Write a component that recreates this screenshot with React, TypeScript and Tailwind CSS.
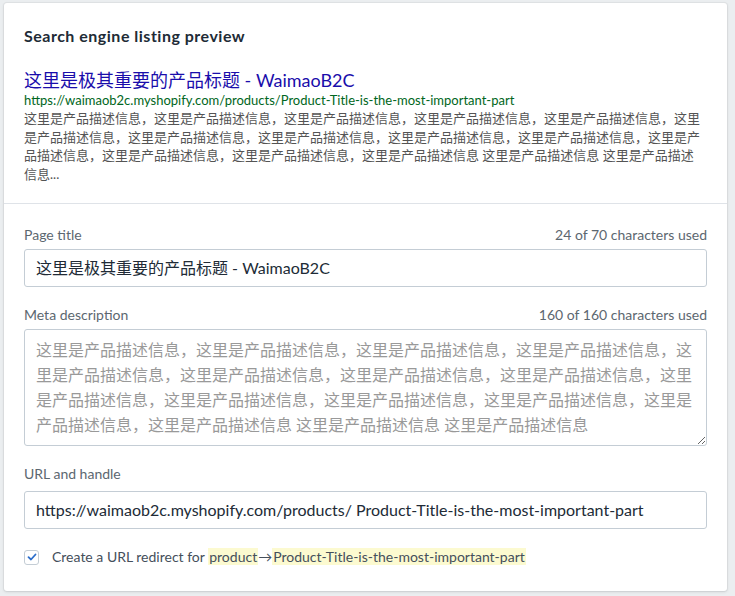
import React from 'react';

const font = '"Lato", "Noto Sans CJK SC", sans-serif';
const group = '这里是产品描述信息';
const metaText =
    Array(14).fill(group).join('，') + ' ' + group + ' ' + group;

// preview snippet, broken the way the search result shows it
const previewLines = [
    Array(5).fill(group).join('，') + '，这里',
    '是产品描述信息，' + Array(4).fill(group).join('，') + '，这里是产',
    '品描述信息，' + Array(3).fill(group).join('，') + ' ' + group + ' 这里是产品描述',
    '信息...',
];

export default function App() {
    return (
        <div
            className="min-h-[596px] bg-[#ebeef0] px-[4px] pt-[3px] pb-[9px]"
            style={{ fontFamily: font }}
        >
            <div className="w-[723px] bg-white rounded-[3px] shadow-[0_0_0_1px_rgba(63,63,68,0.05),0_1px_3px_0_rgba(63,63,68,0.15)]">
                {/* Preview */}
                <section className="px-5 pt-[22px] pb-[20px] border-b border-[#dfe3e8]">
                    <h2 className="text-[16px] leading-[22px] font-bold tracking-[0.5px] text-[#212b36]">
                        Search engine listing preview
                    </h2>
                    <div className="mt-[22px] text-[18px] leading-[22px] text-[#1a0dab]">
                        这里是极其重要的产品标题 - WaimaoB2C
                    </div>
                    <div className="text-[13px] leading-[18px] text-[#006621]">
                        https://waimaob2c.myshopify.com/products/Product-Title-is-the-most-important-part
                    </div>
                    <div className="text-[13px] leading-[18.5px] text-[#545454]">
                        {previewLines.map((line) => (
                            <div key={line} className="whitespace-nowrap">{line}</div>
                        ))}
                    </div>
                </section>

                {/* Fields */}
                <section className="px-5 pt-[21px] pb-[24px]">
                    <div className="flex justify-between text-[14px] leading-[20px] text-[#5c6770]">
                        <span>Page title</span>
                        <span>24 of 70 characters used</span>
                    </div>
                    <div className="mt-[4px] h-[38px] flex items-center px-[11px] border border-[#c4cdd5] rounded-[3px] text-[16px] text-[#212b36]">
                        这里是极其重要的产品标题 - WaimaoB2C
                    </div>

                    <div className="mt-[18px] flex justify-between text-[14px] leading-[20px] text-[#5c6770]">
                        <span>Meta description</span>
                        <span>160 of 160 characters used</span>
                    </div>
                    <textarea
                        readOnly
                        value={metaText}
                        className="mt-[4px] block w-full h-[117px] px-[11px] pt-[7px] border border-[#c4cdd5] rounded-[3px] text-[16px] leading-[25px] text-[#999999] outline-none"
                        style={{ fontFamily: font }}
                    />

                    <div className="mt-[18px] text-[14px] leading-[20px] text-[#5c6770]">
                        URL and handle
                    </div>
                    <div className="mt-[7px] h-[38px] flex items-center px-[11px] border border-[#c4cdd5] rounded-[3px] text-[16px] text-[#212b36] whitespace-nowrap overflow-hidden">
                        https://waimaob2c.myshopify.com/products/ Product-Title-is-the-most-important-part
                    </div>

                    <div className="mt-[18px] flex items-center gap-[13px]">
                        <span className="w-[15px] h-[15px] flex items-center justify-center border border-[#c4cdd5] rounded-[3px] bg-white">
                            <svg width="10" height="10" viewBox="0 0 10 10" fill="none">
                                <path d="M1.5 5.2 L4 7.5 L8.5 2.5" stroke="#2c6ecb" strokeWidth="1.8" strokeLinecap="round" strokeLinejoin="round" />
                            </svg>
                        </span>
                        <span className="text-[14px] leading-[20px] text-[#454f5b]">
                            Create a URL redirect for{' '}
                            <span className="bg-[#fcfad0] px-[1px]">product</span>
                            →
                            <span className="bg-[#fcfad0] px-[1px]">Product-Title-is-the-most-important-part</span>
                        </span>
                    </div>
                </section>
            </div>
        </div>
    );
}
